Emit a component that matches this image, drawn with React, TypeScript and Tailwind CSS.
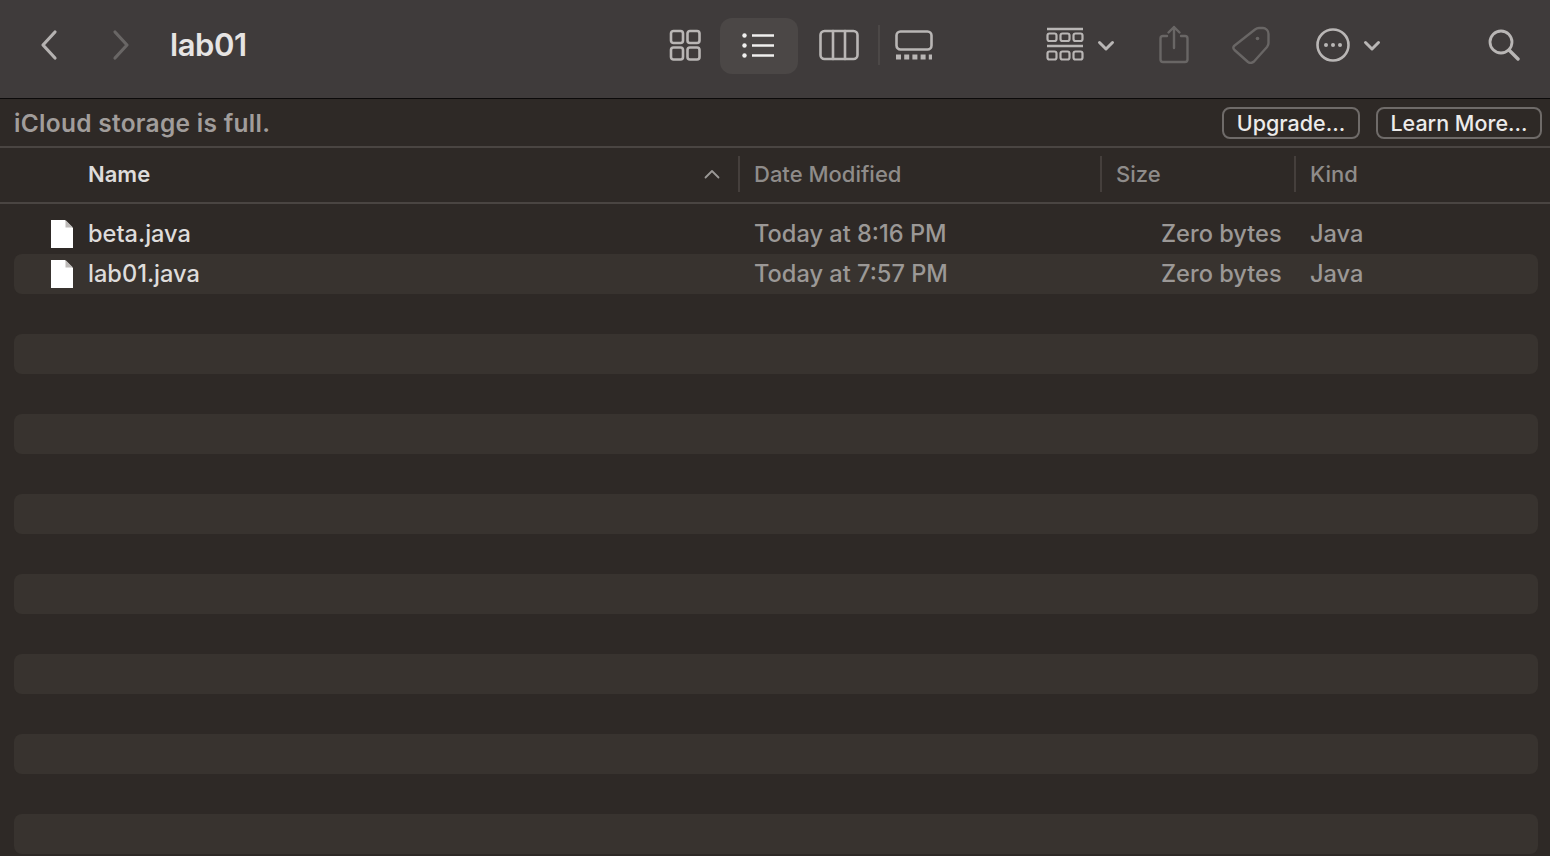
import React from "react";

const Ico = ({ w, h, className, children }: { w: number; h: number; className?: string; children: React.ReactNode }) => (
  <svg width={w} height={h} viewBox={`0 0 ${w} ${h}`} fill="none" stroke="currentColor" strokeWidth={3} strokeLinecap="round" strokeLinejoin="round" className={`shrink-0 ${className ?? ""}`}>
    {children}
  </svg>
);

const Chevron = () => (
  <Ico w={18} h={12}>
    <path d="M2.5 2.5 L9 9 L15.5 2.5" strokeWidth={3} />
  </Ico>
);

const files = [
  { name: "beta.java", date: "Today at 8:16 PM" },
  { name: "lab01.java", date: "Today at 7:57 PM" },
];

function Row({ striped, name, date }: { striped: boolean; name?: string; date?: string }) {
  return (
    <div className={`h-10 ml-[14px] w-[1524px] rounded-lg flex items-center text-[23.600px] font-[450] shrink-0 ${striped ? "bg-[#38332f]" : ""}`}>
      {name ? (
        <>
          <svg width={24} height={30} viewBox="0 0 24 30" className="ml-[36px] shrink-0">
            <path d="M1 1 H15 L23 9 V29 H1 Z" fill="#ffffff" />
            <path d="M15.5 1 L23 8.5 H15.5 Z" fill="#bdbab8" />
          </svg>
          <span className="ml-[14px] w-[666px] text-[#dedcdb]">{name}</span>
          <span className="w-[407px] text-[#9b9896]">{date}</span>
          <span className="w-[120px] text-right text-[#9b9896] whitespace-nowrap">Zero bytes</span>
          <span className="ml-[29px] text-[#9b9896]">Java</span>
        </>
      ) : null}
    </div>
  );
}

function Column({ label, width }: { label: string; width: number }) {
  return (
    <div className="flex items-center h-[36px] border-l-2 border-[#453f3c] pl-[14px] shrink-0" style={{ width }}>
      <span className="text-[#8f8c8a]">{label}</span>
    </div>
  );
}

export default function App() {
  return (
    <div className="w-[1550px] h-[856px] overflow-hidden bg-[#2e2926] flex flex-col font-['Inter',sans-serif]">
      {/* toolbar */}
      <header className="h-[99px] shrink-0 bg-[#3f3b3b] border-b border-[#0c0a0a] flex items-center text-[#b9b6b5] pb-[8px]">
        <Ico w={20} h={32} className="ml-[39px] text-[#b5b2b1]">
          <path d="M16 3 L4 16 L16 29" strokeWidth={3.2} />
        </Ico>
        <Ico w={20} h={32} className="ml-[52px] text-[#696665]">
          <path d="M4 3 L16 16 L4 29" strokeWidth={3.2} />
        </Ico>
        <h1 className="ml-[39px] w-[500px] text-[31px] font-semibold text-[#e6e4e3] tracking-[-0.4px]">lab01</h1>

        <Ico w={32} h={32} className="-ml-[1px]">
          <rect x="2" y="2" width="12" height="12" rx="2.5" strokeWidth={2.6} />
          <rect x="18.5" y="2" width="12" height="12" rx="2.5" strokeWidth={2.6} />
          <rect x="2" y="18.5" width="12" height="12" rx="2.5" strokeWidth={2.6} />
          <rect x="18.5" y="18.5" width="12" height="12" rx="2.5" strokeWidth={2.6} />
        </Ico>
        <div className="ml-[19px] w-[78px] h-[56px] mt-[2px] pb-[2px] rounded-xl bg-[#4b4746] flex items-center justify-center text-[#f0efee]">
          <Ico w={36} h={26}>
            <circle cx="3.5" cy="3.5" r="2.2" fill="currentColor" stroke="none" />
            <circle cx="3.5" cy="13.5" r="2.2" fill="currentColor" stroke="none" />
            <circle cx="3.5" cy="23.5" r="2.2" fill="currentColor" stroke="none" />
            <path d="M11 3.5 H33 M11 13.5 H33 M11 23.5 H33" strokeLinecap="butt" strokeWidth={2.6} />
          </Ico>
        </div>
        <Ico w={40} h={32} className="ml-[21px]">
          <rect x="1.5" y="2" width="37" height="28" rx="4" strokeWidth={2.6} />
          <path d="M14 2 V30 M26 2 V30" strokeWidth={2.6} />
        </Ico>
        <div className="ml-[19px] w-[2px] h-[40px] bg-[#4c4847]" />
        <Ico w={40} h={30} className="ml-[14px]">
          <rect x="2.500" y="1.500" width="35" height="18" rx="4" strokeWidth={2.6} />
          <path d="M2 27 H38" strokeWidth={5} strokeDasharray="5 3.2" strokeLinecap="butt" />
        </Ico>

        <Ico w={38} h={36} className="ml-[112px]">
          <path d="M1 2 H37 M1 19 H37" strokeLinecap="butt" strokeWidth={2.5} />
          <rect x="1.5" y="6.5" width="9" height="7.5" rx="2" strokeWidth={2.2} />
          <rect x="14.5" y="6.5" width="9" height="7.5" rx="2" strokeWidth={2.2} />
          <rect x="27.5" y="6.5" width="9" height="7.5" rx="2" strokeWidth={2.2} />
          <rect x="1.5" y="24.5" width="9" height="8" rx="2" strokeWidth={2.2} />
          <rect x="14.5" y="24.5" width="9" height="8" rx="2" strokeWidth={2.2} />
          <rect x="27.5" y="24.5" width="9" height="8" rx="2" strokeWidth={2.2} />
        </Ico>
        <div className="ml-[13px] mt-[1px]"><Chevron /></div>

        <Ico w={30} h={40} className="ml-[44px] text-[#696665]">
          <path d="M8 11 H4 Q1.5 11 1.5 13.5 V34.500 Q1.5 37 4 37 H26 Q28.500 37 28.500 34.500 V13.500 Q28.500 11 26 11 H22" strokeWidth={2.4} />
          <path d="M15 23 V2 M9.500 7.500 L15 2 L20.500 7.500" strokeWidth={2.4} />
        </Ico>

        <Ico w={40} h={38} className="ml-[42px] text-[#696665]">
          <path d="M3 20 L24 3.500 Q26 2 28 2 L32 2 Q34 2 35.500 3.500 L36 4 Q37.500 5.500 37.500 8 L37.500 17 Q37.500 19 36 21 L23 35.500 Q20 38 17 36 L3.500 24 Q1.500 22 3 20 Z" strokeWidth={2.4} />
          <circle cx="26.500" cy="12.500" r="1.800" fill="currentColor" stroke="none" />
        </Ico>

        <Ico w={34} h={34} className="ml-[45px]">
          <circle cx="17" cy="17" r="15.500" strokeWidth={2.6} />
          <circle cx="10" cy="17" r="2" fill="currentColor" stroke="none" />
          <circle cx="17" cy="17" r="2" fill="currentColor" stroke="none" />
          <circle cx="24" cy="17" r="2" fill="currentColor" stroke="none" />
        </Ico>
        <div className="ml-[13px] mt-[1px]"><Chevron /></div>

        <Ico w={32} h={32} className="ml-[107px]">
          <circle cx="13" cy="13" r="11" strokeWidth={2.8} />
          <path d="M21 21 L30 30" strokeWidth={3.4} />
        </Ico>
      </header>

      {/* banner */}
      <div className="h-[49px] shrink-0 border-b-2 border-[#4a4542] flex items-center pl-[14px] pr-[8px] pt-[1px]">
        <span className="text-[24.500px] font-semibold text-[#a19d9b] grow tracking-[0.28px]">iCloud storage is full.</span>
        <button className="h-[32px] w-[138px] border-2 border-[#6f6b69] rounded-lg text-[#ecebea] text-[21.500px] font-[450] flex items-center justify-center">Upgrade...</button>
        <button className="h-[32px] w-[166px] ml-[16px] border-2 border-[#6f6b69] rounded-lg text-[#ecebea] text-[21.500px] font-[450] flex items-center justify-center">Learn More...</button>
      </div>

      {/* column headers */}
      <div className="h-[56px] shrink-0 border-b-2 border-[#4a4542] flex items-center text-[22px] font-[450] pb-[2px]">
        <div className="w-[738px] shrink-0 pl-[88px] pr-[18px] flex items-center justify-between">
          <span className="font-semibold text-[#dedcdb]">Name</span>
          <Ico w={16} h={10} className="text-[#9b9896]">
            <path d="M1.500 8.500 L8 2 L14.500 8.500" strokeWidth={1.800} />
          </Ico>
        </div>
        <Column label="Date Modified" width={362} />
        <Column label="Size" width={194} />
        <Column label="Kind" width={250} />
      </div>

      {/* list */}
      <div className="flex flex-col pt-[10px]">
        {Array.from({ length: 16 }).map((_, i) => (
          <Row key={i} striped={i % 2 === 1} name={files[i]?.name} date={files[i]?.date} />
        ))}
      </div>
    </div>
  );
}
